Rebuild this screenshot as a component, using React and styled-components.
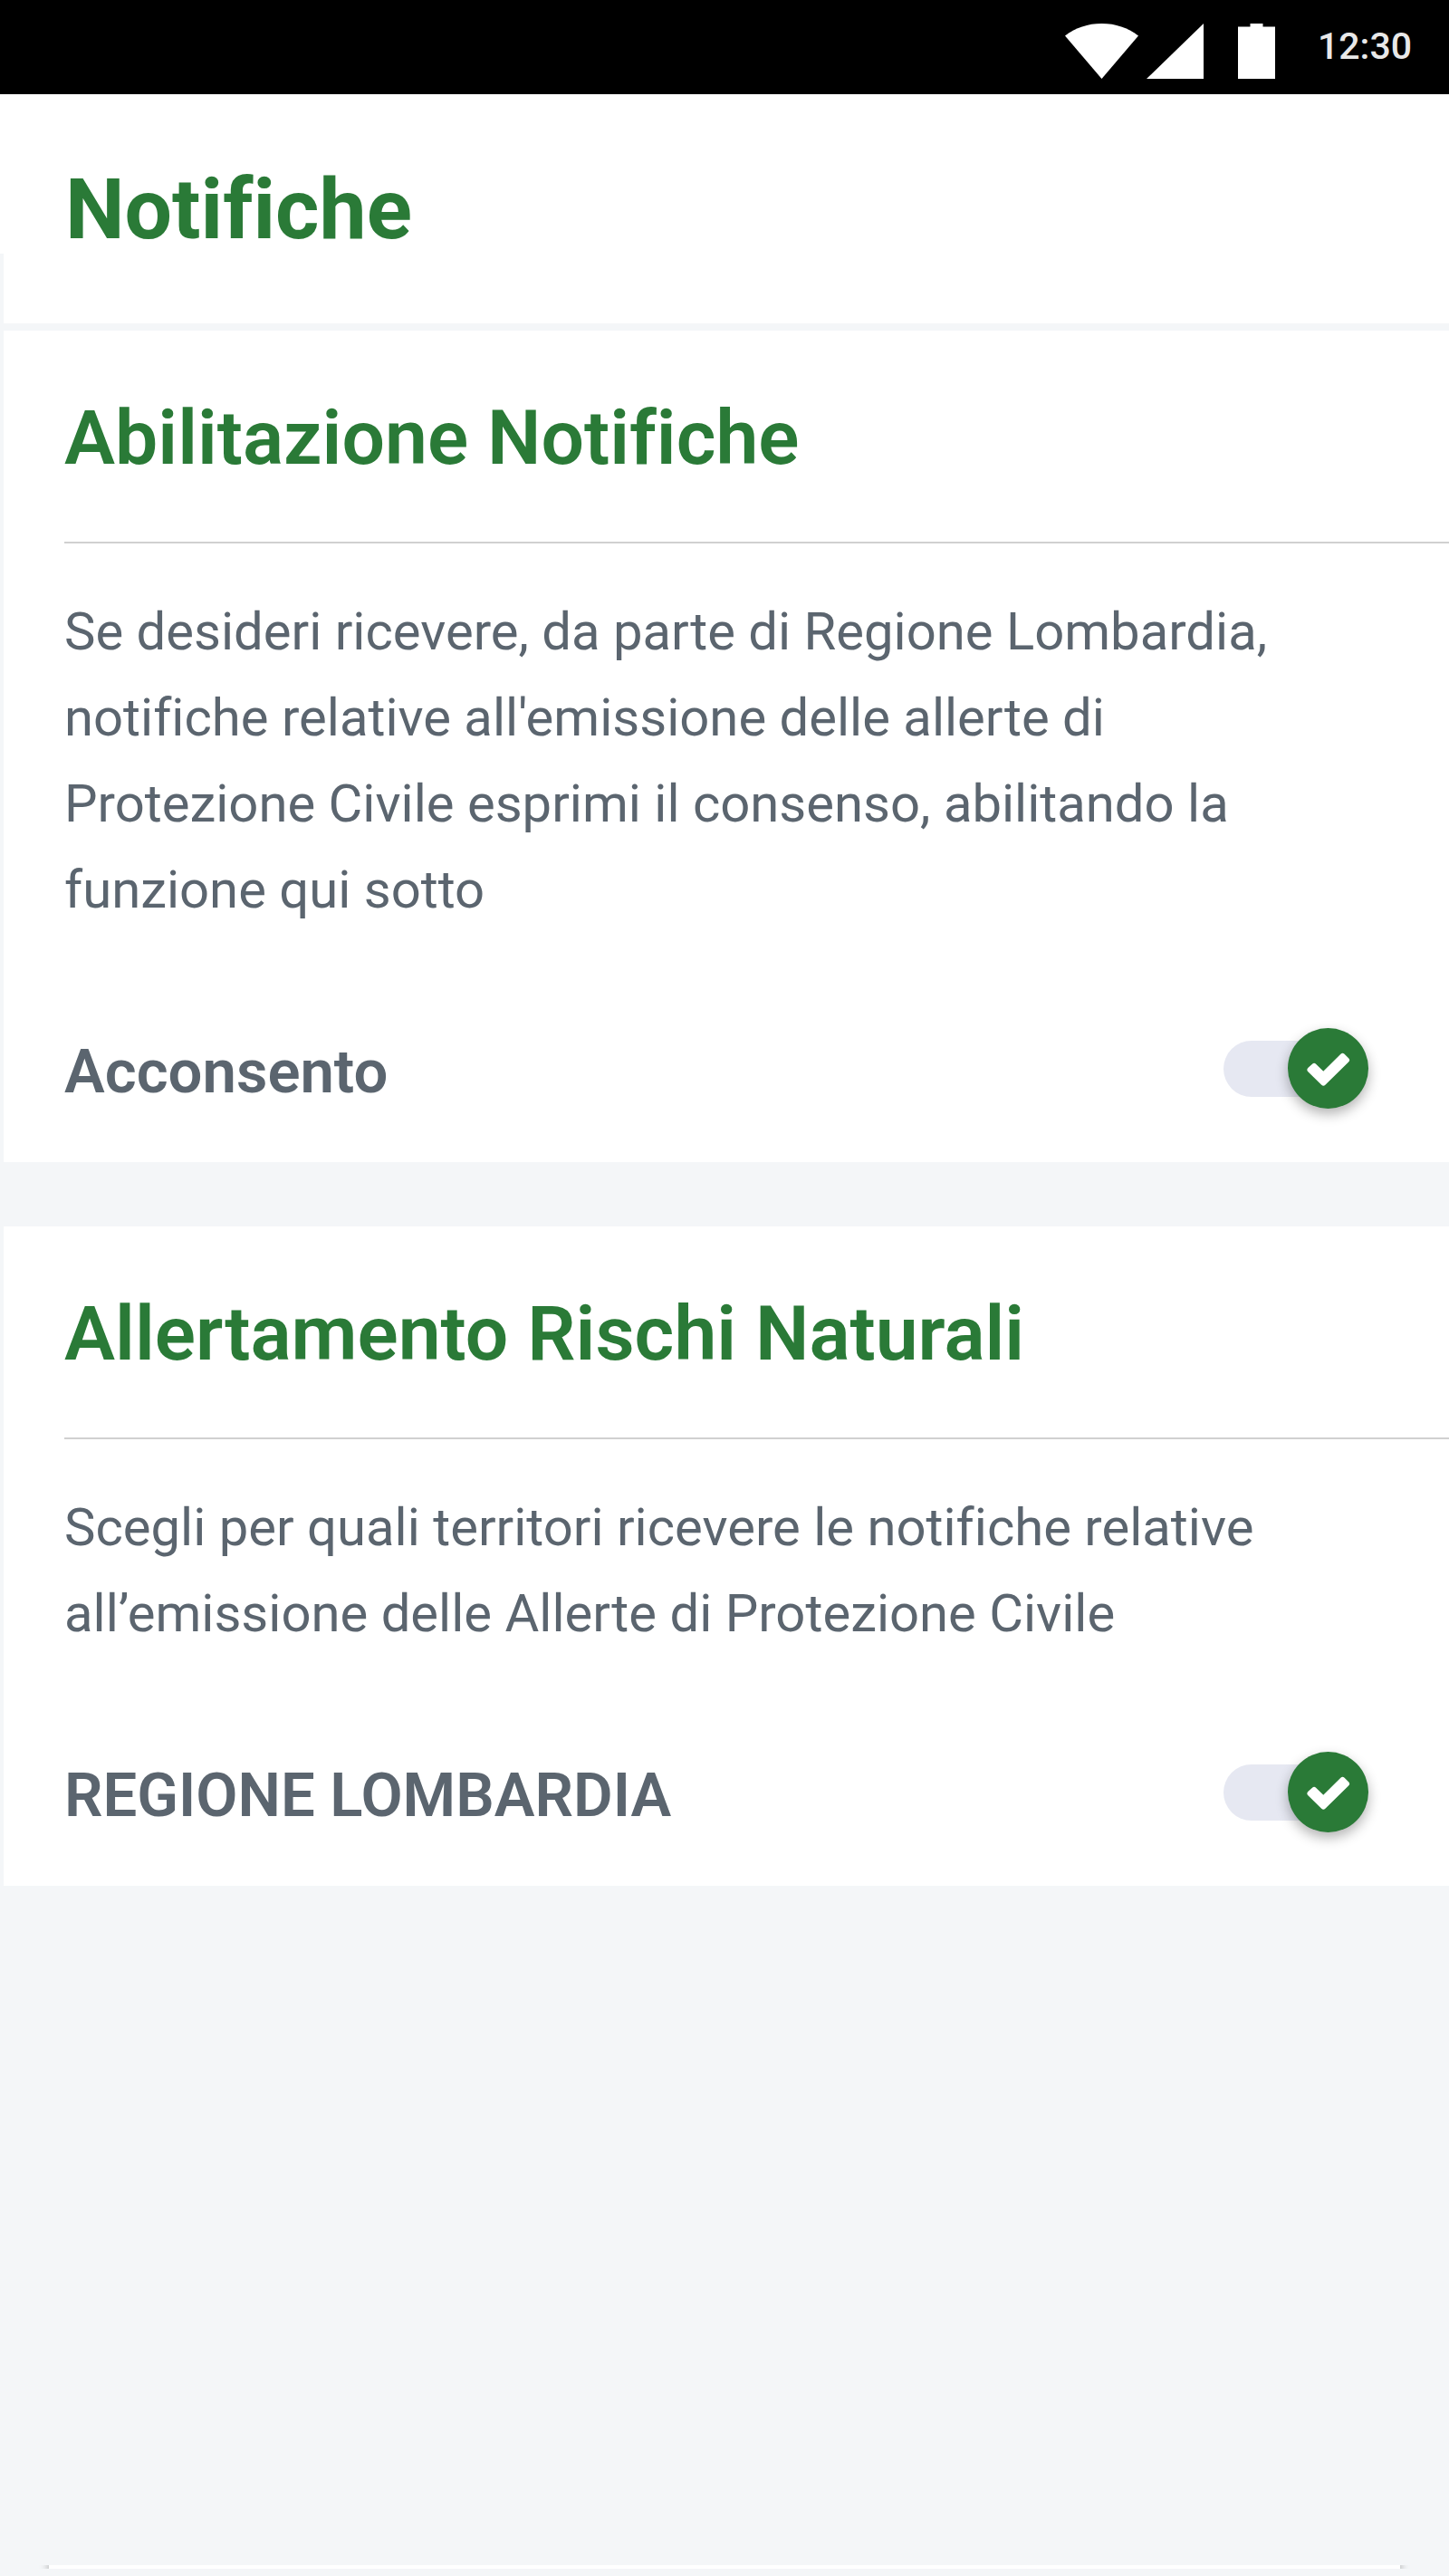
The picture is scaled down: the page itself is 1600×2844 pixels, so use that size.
import React from "react"
import styled, { createGlobalStyle } from "styled-components"

const GlobalStyle = createGlobalStyle`
  :root {
    --green: #2a7a37;
    --grey: #5b656f;
    --page: #f4f6f8;
    --track: #e6e8f2;
    --line: #d0d0d0;
  }

  * {
    box-sizing: border-box;
  }

  body {
    margin: 0;
    background: var(--page);
    font-family: Roboto, "Open Sans", sans-serif;
    font-variant-ligatures: none;
  }
`

const Page = styled.div`
  display: flex;
  flex-direction: column;
  min-height: 100vh;
`

const StatusBar = styled.div`
  display: flex;
  justify-content: flex-end;
  align-items: flex-start;
  gap: 47px;
  height: 104px;
  padding-right: 41px;
  background: #000;
`

const StatusIcons = styled.div`
  display: flex;
  gap: 9px;
  padding-top: 26px;

  svg {
    display: block;
    height: 61px;
    fill: #fff;
  }

  svg:last-child {
    margin-left: 29px;
  }
`

const Clock = styled.time`
  color: #e8e8e8;
  font-size: 41px;
  font-weight: 500;
  line-height: 102px;
`

const Header = styled.header`
  padding: 82px 72px 2px;
  background: #fff;
`

const Title = styled.h1`
  margin: 0;
  color: var(--green);
  font-size: 93px;
  font-weight: 700;
  line-height: 92px;
`

const Content = styled.main`
  margin-left: 4px;
`

const HeaderGap = styled.div`
  height: 77px;
  margin-bottom: 8px;
  background: #fff;
`

const Panel = styled.section`
  margin-bottom: 71px;
  padding-left: 67px;
  background: #fff;
`

const Heading = styled.h2`
  margin: 0;
  padding: 69px 0 64px;
  border-bottom: 2px solid var(--line);
  color: var(--green);
  font-size: 84px;
  font-weight: 600;
  line-height: 100px;
`

const Description = styled.p`
  margin: 0;
  padding: 50px 160px 105px 0;
  color: var(--grey);
  font-size: 58px;
  line-height: 95px;
`

const Row = styled.label`
  display: flex;
  justify-content: space-between;
  align-items: flex-start;
  padding: 0 89px 52px 0;
  color: var(--grey);
  font-size: 67px;
  font-weight: 600;
  line-height: 96px;
`

const SwitchBox = styled.span`
  position: relative;
  display: flex;
  align-items: center;
  width: 160px;
  height: 89px;
`

const SwitchInput = styled.input`
  appearance: none;
  width: 100%;
  height: 62px;
  margin: 0;
  border-radius: 31px;
  background: var(--track);
  cursor: pointer;
`

const Knob = styled.svg`
  position: absolute;
  top: 0;
  ${(props) => (props.$on ? "right: 0" : "left: 0")};
  width: 89px;
  height: 89px;
  border-radius: 50%;
  background: ${(props) => (props.$on ? "var(--green)" : "#fff")};
  box-shadow: 0 6px 14px rgba(0, 0, 0, 0.3);
  pointer-events: none;
`

const SheetClip = styled.div`
  margin-top: auto;
  margin-bottom: 8px;
  padding: 0 54px;
  overflow: hidden;
`

const SheetEdge = styled.div`
  height: 4px;
  background: #fff;
  box-shadow: 0 0 8px 1px rgba(0, 0, 0, 0.5);
`

class Switch extends React.Component {
  state = {
    on: true,
  }

  handleChange = (event) => {
    this.setState({ on: event.target.checked })
  }

  render() {
    const { on } = this.state
    return (
      <SwitchBox>
        <SwitchInput type="checkbox" id={this.props.id} checked={on} onChange={this.handleChange} />
        <Knob $on={on} viewBox="0 0 89 89" aria-hidden="true">
          {on && (
            <path
              d="M24.5 46 29 42 39.3 52 60.5 31 65 35.3 39.3 60.5Z"
              fill="#fff"
              stroke="#fff"
              strokeWidth="6"
              strokeLinejoin="round"
            />
          )}
        </Knob>
      </SwitchBox>
    )
  }
}

const NotificationPanel = ({ id, heading, text, label }) => (
  <Panel>
    <Heading>{heading}</Heading>
    <Description>{text}</Description>
    <Row htmlFor={id}>
      {label}
      <Switch id={id} />
    </Row>
  </Panel>
)

const App = () => (
  <Page>
    <GlobalStyle />
    <StatusBar>
      <StatusIcons>
        <svg viewBox="0 0 81 61" width="81" aria-hidden="true">
          <path d="M0 13.5C12 4.5 25 0 40.5 0S69 4.5 81 13.5L40.5 61Z" />
        </svg>
        <svg viewBox="0 0 63 61" width="63" aria-hidden="true">
          <path d="M63 0V61H0Z" />
        </svg>
        <svg viewBox="0 0 41 61" width="41" aria-hidden="true">
          <path d="M0 3.5H13.5V0H27.5V3.5H41V61H0Z" />
        </svg>
      </StatusIcons>
      <Clock>12:30</Clock>
    </StatusBar>
    <Header>
      <Title>Notifiche</Title>
    </Header>
    <Content>
      <HeaderGap />
      <NotificationPanel
        id="consent"
        heading="Abilitazione Notifiche"
        text="Se desideri ricevere, da parte di Regione Lombardia, notifiche relative all'emissione delle allerte di Protezione Civile esprimi il consenso, abilitando la funzione qui sotto"
        label="Acconsento"
      />
      <NotificationPanel
        id="region"
        heading="Allertamento Rischi Naturali"
        text="Scegli per quali territori ricevere le notifiche relative all’emissione delle Allerte di Protezione Civile"
        label="REGIONE LOMBARDIA"
      />
    </Content>
    <SheetClip>
      <SheetEdge />
    </SheetClip>
  </Page>
)

export default App
